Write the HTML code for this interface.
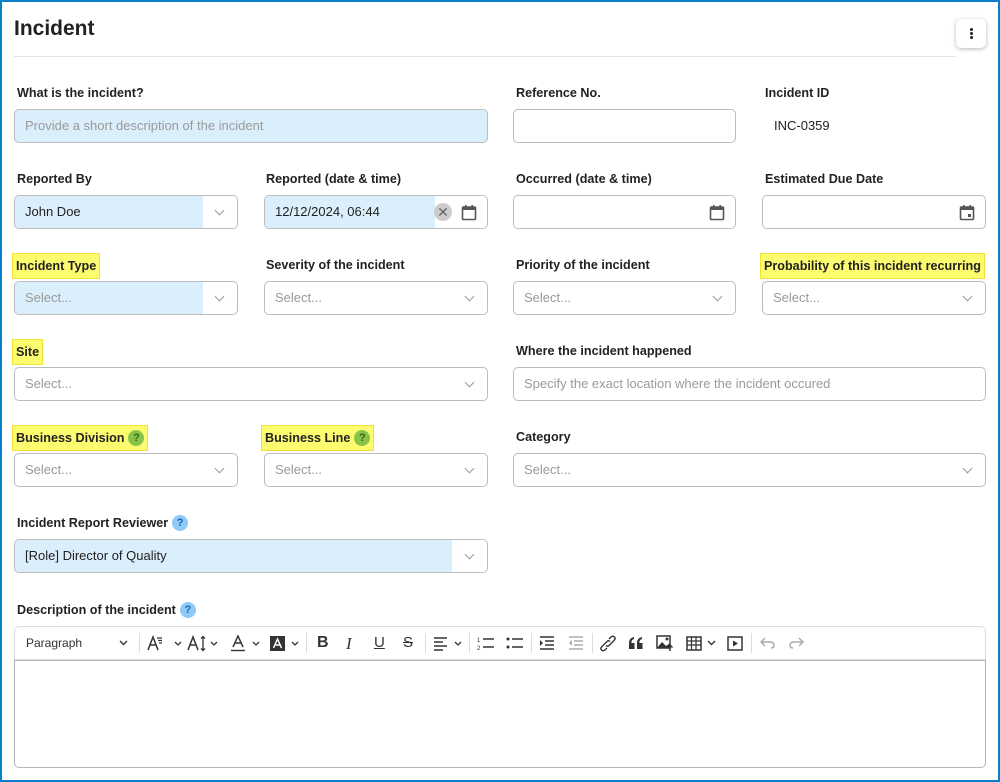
<!DOCTYPE html>
<html><head><meta charset="utf-8"><style>
*{box-sizing:border-box;margin:0;padding:0}
body{width:1000px;height:782px;background:#fff;font-family:"Liberation Sans",sans-serif;position:relative;overflow:hidden;color:#222}
.frame{position:absolute;left:0;top:0;width:1000px;height:782px;border:2px solid #0a7fc9;}
.t{position:absolute;left:14px;top:17px;font-size:21px;font-weight:bold;color:#222}
.hr{position:absolute;left:14px;top:56px;width:942px;height:1px;background:#e3e3e3}
.menu{position:absolute;left:956px;top:19px;width:30px;height:29px;border-radius:5px;background:#fff;box-shadow:0 1px 4px rgba(0,0,0,.3)}
.menu i{position:absolute;left:14px;width:3px;height:3px;background:#222;border-radius:50%}
.l{position:absolute;font-size:12.6px;font-weight:bold;color:#222;white-space:nowrap;line-height:24px}
.hl{background:#fdfb6e;border:1px solid #efe23a;padding:0 3px;margin-left:-3px}
.f{position:absolute;height:34px;border:1px solid #bdbdbd;border-radius:5px;background:#fff;font-size:13px;line-height:32px;padding-left:10px;color:#222;overflow:hidden}
.ph{color:#9a9a9a}
.blue{background:#dbeefc}
.fill{position:absolute;left:0;top:0;bottom:0;background:#dbeefc;border-radius:4px 0 0 4px}
.txt{position:relative}
.chev{position:absolute;right:14px;top:11px;width:7px;height:7px;border-right:1.3px solid #999;border-bottom:1.3px solid #999;transform:rotate(45deg)}
.cal{position:absolute;right:10px;top:8px}
.q{display:inline-block;width:16px;height:16px;border-radius:50%;font-size:11px;line-height:16px;text-align:center;vertical-align:1px;margin-left:4px}
.qg{background:#8bc34a;color:#2e6b12}
.qb{background:#90caf9;color:#1e63b0}
.tb{position:absolute;left:14px;top:626px;width:972px;height:34px;border:1px solid #dcdcdc;border-radius:5px 5px 0 0;font-size:12px}
.ed{position:absolute;left:14px;top:660px;width:972px;height:108px;border:1px solid #b5b5b5;border-radius:0 0 5px 5px}
.tb svg{position:absolute;top:8px}
.sep{position:absolute;top:6px;width:1px;height:20px;background:#ddd}
</style></head><body>
<div class="frame"></div>
<div class="t">Incident</div>
<div class="hr"></div>
<div class="menu"><i style="top:9px"></i><i style="top:13px"></i><i style="top:17px"></i></div>

<div class="l" style="left:17px;top:81px">What is the incident?</div>
<div class="f blue ph" style="left:14px;top:109px;width:474px">Provide a short description of the incident</div>
<div class="l" style="left:516px;top:81px">Reference No.</div>
<div class="f" style="left:513px;top:109px;width:223px"></div>
<div class="l" style="left:765px;top:81px">Incident ID</div>
<div class="l" style="left:774px;top:114px;font-weight:normal;font-size:13px">INC-0359</div>

<div class="l" style="left:17px;top:167px">Reported By</div>
<div class="f" style="left:14px;top:195px;width:224px"><div class="fill" style="width:188px"></div><span class="txt">John Doe</span><div class="chev"></div></div>
<div class="l" style="left:266px;top:167px">Reported (date &amp; time)</div>
<div class="f" style="left:264px;top:195px;width:224px"><div class="fill" style="width:170px"></div><span class="txt">12/12/2024, 06:44</span>
<div style="position:absolute;left:169px;top:7px;width:18px;height:18px;border-radius:50%;background:#ccc;color:#666;font-size:14px;line-height:18px;text-align:center;padding:0">✕</div>
<svg class="cal" width="16" height="17" viewBox="0 0 16 17"><rect x="1.5" y="3" width="13" height="12.5" rx="1" fill="none" stroke="#555" stroke-width="1.6"/><rect x="1.5" y="3" width="13" height="3" fill="#555"/><rect x="4" y="1" width="1.6" height="3" fill="#555"/><rect x="10.4" y="1" width="1.6" height="3" fill="#555"/></svg></div>
<div class="l" style="left:516px;top:167px">Occurred (date &amp; time)</div>
<div class="f" style="left:513px;top:195px;width:223px"><svg class="cal" width="16" height="17" viewBox="0 0 16 17"><rect x="1.5" y="3" width="13" height="12.5" rx="1" fill="none" stroke="#555" stroke-width="1.6"/><rect x="1.5" y="3" width="13" height="3" fill="#555"/><rect x="4" y="1" width="1.6" height="3" fill="#555"/><rect x="10.4" y="1" width="1.6" height="3" fill="#555"/></svg></div>
<div class="l" style="left:765px;top:167px">Estimated Due Date</div>
<div class="f" style="left:762px;top:195px;width:224px"><svg class="cal" width="16" height="17" viewBox="0 0 16 17"><rect x="1.5" y="3" width="13" height="12.5" rx="1" fill="none" stroke="#555" stroke-width="1.6"/><rect x="1.5" y="3" width="13" height="3" fill="#555"/><rect x="4" y="1" width="1.6" height="3" fill="#555"/><rect x="10.4" y="1" width="1.6" height="3" fill="#555"/><rect x="9" y="10" width="3" height="3" fill="#555"/></svg></div>

<div class="l hl" style="left:15px;top:253px">Incident Type</div>
<div class="f ph" style="left:14px;top:281px;width:224px"><div class="fill" style="width:188px"></div><span class="txt">Select...</span><div class="chev"></div></div>
<div class="l" style="left:266px;top:253px">Severity of the incident</div>
<div class="f ph" style="left:264px;top:281px;width:224px">Select...<div class="chev"></div></div>
<div class="l" style="left:516px;top:253px">Priority of the incident</div>
<div class="f ph" style="left:513px;top:281px;width:223px">Select...<div class="chev"></div></div>
<div class="l hl" style="left:763px;top:253px">Probability of this incident recurring</div>
<div class="f ph" style="left:762px;top:281px;width:224px">Select...<div class="chev"></div></div>

<div class="l hl" style="left:15px;top:339px">Site</div>
<div class="f ph" style="left:14px;top:367px;width:474px">Select...<div class="chev"></div></div>
<div class="l" style="left:516px;top:339px">Where the incident happened</div>
<div class="f ph" style="left:513px;top:367px;width:473px">Specify the exact location where the incident occured</div>

<div class="l hl" style="left:15px;top:425px">Business Division<span class="q qg">?</span></div>
<div class="f ph" style="left:14px;top:453px;width:224px">Select...<div class="chev"></div></div>
<div class="l hl" style="left:264px;top:425px">Business Line<span class="q qg">?</span></div>
<div class="f ph" style="left:264px;top:453px;width:224px">Select...<div class="chev"></div></div>
<div class="l" style="left:516px;top:425px">Category</div>
<div class="f ph" style="left:513px;top:453px;width:473px">Select...<div class="chev"></div></div>

<div class="l" style="left:17px;top:511px">Incident Report Reviewer<span class="q qb">?</span></div>
<div class="f" style="left:14px;top:539px;width:474px"><div class="fill" style="width:437px"></div><span class="txt">[Role] Director of Quality</span><div class="chev"></div></div>

<div class="l" style="left:17px;top:598px">Description of the incident<span class="q qb">?</span></div>
<div class="tb">
<span style="position:absolute;left:11px;top:9px;color:#333">Paragraph</span>
<svg style="left:104px;top:13px" width="9" height="6"><path d="M1 1L4.5 4.5 8 1" stroke="#333" stroke-width="1.4" fill="none"/></svg>
<div class="sep" style="left:124px"></div>
<svg style="left:132px" width="36" height="17"><path d="M1 15L6 2 11 15M3 10H9" stroke="#333" stroke-width="1.5" fill="none"/><path d="M10 3H15M11 5.5H15M12 8H15" stroke="#333" stroke-width="1.2"/><path d="M28 7L31 10 34 7" stroke="#333" stroke-width="1.3" fill="none"/></svg>
<svg style="left:172px" width="36" height="17"><path d="M1 15L6 2 11 15M3 10H9" stroke="#333" stroke-width="1.5" fill="none"/><path d="M16 2V15M14 3.5L16 1.5 18 3.5M14 13.5L16 15.5 18 13.5" stroke="#333" stroke-width="1.3" fill="none"/><path d="M24 7L27 10 30 7" stroke="#333" stroke-width="1.3" fill="none"/></svg>
<svg style="left:216px" width="30" height="17"><path d="M2 12L7 1 12 12M4 8H10" stroke="#333" stroke-width="1.5" fill="none"/><path d="M0 15.5H14" stroke="#333" stroke-width="1.4"/><path d="M22 7L25 10 28 7" stroke="#333" stroke-width="1.3" fill="none"/></svg>
<svg style="left:255px" width="32" height="17"><rect x="0" y="1" width="15" height="15" fill="#333"/><path d="M3.5 13L7.5 4 11.5 13M5 10H10" stroke="#fff" stroke-width="1.5" fill="none"/><path d="M22 7L25 10 28 7" stroke="#333" stroke-width="1.3" fill="none"/></svg>
<div class="sep" style="left:291px"></div>
<span style="position:absolute;left:302px;top:7px;font-size:16px;font-weight:bold;color:#333">B</span>
<span style="position:absolute;left:331px;top:7px;font-size:17px;font-style:italic;font-family:'Liberation Serif',serif;color:#333">I</span>
<span style="position:absolute;left:359px;top:7px;font-size:15px;text-decoration:underline;color:#333">U</span>
<span style="position:absolute;left:388px;top:7px;font-size:15px;text-decoration:line-through;color:#333">S</span>
<div class="sep" style="left:410px"></div>
<svg style="left:418px" width="32" height="17"><path d="M1 3H14M1 7H10M1 11H14M1 15H10" stroke="#333" stroke-width="1.4"/><path d="M22 7L25 10 28 7" stroke="#333" stroke-width="1.3" fill="none"/></svg>
<div class="sep" style="left:454px"></div>
<svg style="left:462px" width="18" height="17"><text x="0" y="7" font-size="6" fill="#333" font-family="Liberation Sans">1</text><text x="0" y="15" font-size="6" fill="#333" font-family="Liberation Sans">2</text><path d="M6 4H17M6 12H17" stroke="#333" stroke-width="1.5"/></svg>
<svg style="left:491px" width="18" height="17"><circle cx="2" cy="4" r="1.5" fill="#333"/><circle cx="2" cy="12" r="1.5" fill="#333"/><path d="M6 4H17M6 12H17" stroke="#333" stroke-width="1.5"/></svg>
<div class="sep" style="left:516px"></div>
<svg style="left:524px" width="16" height="17"><path d="M1 2H15M6 6H15M6 10H15M1 14H15" stroke="#333" stroke-width="1.5"/><path d="M1 5L4 8 1 11Z" fill="#333"/></svg>
<svg style="left:553px" width="16" height="17"><path d="M1 2H15M6 6H15M6 10H15M1 14H15" stroke="#aaa" stroke-width="1.5"/><path d="M4 5L1 8 4 11Z" fill="#aaa"/></svg>
<div class="sep" style="left:577px"></div>
<svg style="left:585px" width="16" height="17"><path d="M9 4L11 2Q13 0.5 14.5 2 16 3.5 14 5.5L9 10.5Q7.5 12 6 10.5M7 13L5 15Q3 16.5 1.5 15 0 13.5 2 11.5L7 6.5Q8.5 5 10 6.5" stroke="#333" stroke-width="1.4" fill="none"/></svg>
<svg style="left:613px" width="16" height="17"><path d="M1 8Q1 3 6 2V4Q3 5 3.5 8H6.5V14H1Z M9 8Q9 3 14 2V4Q11 5 11.5 8H14.5V14H9Z" fill="#333"/></svg>
<svg style="left:641px" width="18" height="17"><rect x="1" y="1" width="13" height="12" fill="none" stroke="#333" stroke-width="1.5"/><path d="M1 13 L6 7 L10 11 L14 8 V13Z" fill="#333"/><circle cx="11" cy="4" r="1.5" fill="#333"/><path d="M14 16V10M11.5 12.5L14 10 16.5 12.5" stroke="#333" stroke-width="1.5" fill="none"/></svg>
<svg style="left:671px;top:9px" width="16" height="15"><rect x="1" y="1" width="14" height="13" fill="none" stroke="#333" stroke-width="1.5"/><path d="M1 5H15M1 9H15M5.5 1V14M10 1V14" stroke="#333" stroke-width="1.2"/></svg>
<svg style="left:692px;top:13px" width="9" height="6"><path d="M1 1L4.5 4.5 8 1" stroke="#333" stroke-width="1.4" fill="none"/></svg>
<svg style="left:712px;top:9px" width="16" height="15"><rect x="1" y="1" width="14" height="13" fill="none" stroke="#333" stroke-width="1.5"/><path d="M6 4.5V10.5L11 7.5Z" fill="#333"/></svg>
<div class="sep" style="left:736px"></div>
<svg style="left:745px;top:10px" width="16" height="12"><path d="M5 1L1 5 5 9M1 5H10Q14 5 14 8.5 14 11 11 11" stroke="#aaa" stroke-width="1.4" fill="none"/></svg>
<svg style="left:773px;top:10px" width="16" height="12"><path d="M11 1L15 5 11 9M15 5H6Q2 5 2 8.5 2 11 5 11" stroke="#aaa" stroke-width="1.4" fill="none"/></svg>
</div>
<div class="ed"></div>
</body></html>
